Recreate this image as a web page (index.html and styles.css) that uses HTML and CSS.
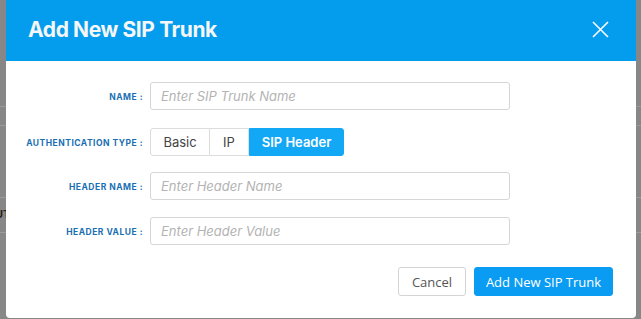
FILE: index.html
```html
<!DOCTYPE html>
<html>
<head>
<meta charset="utf-8">
<link rel="stylesheet" href="styles.css">
</head>
<body>
<div class="backdrop">
  <div class="behind-text">UT</div>
  <div class="modal">
    <div class="modal-header">
      <h1 class="title">Add New SIP Trunk</h1>
      <button class="close" aria-label="Close">
        <svg width="17" height="17" viewBox="0 0 17 17"><path d="M1 1L16 16M16 1L1 16" stroke="#fff" stroke-width="1.6" fill="none"/></svg>
      </button>
    </div>
    <div class="modal-body">
      <div class="row">
        <label class="label">Name :</label>
        <div class="input"><span class="ph">Enter SIP Trunk Name</span></div>
      </div>
      <div class="row row-seg">
        <label class="label">Authentication Type :</label>
        <div class="seg">
          <span class="seg-item seg-basic">Basic</span>
          <span class="seg-item seg-ip">IP</span>
          <span class="seg-item seg-active">SIP Header</span>
        </div>
      </div>
      <div class="row row-hn">
        <label class="label">Header Name :</label>
        <div class="input"><span class="ph">Enter Header Name</span></div>
      </div>
      <div class="row row-hv">
        <label class="label">Header Value :</label>
        <div class="input"><span class="ph">Enter Header Value</span></div>
      </div>
    </div>
    <div class="modal-footer">
      <button class="btn btn-cancel">Cancel</button>
      <button class="btn btn-primary">Add New SIP Trunk</button>
    </div>
  </div>
</div>
</body>
</html>
```
FILE: styles.css
```css
html, body {
  margin: 0;
  padding: 0;
  width: 641px;
  height: 319px;
  overflow: hidden;
}
body {
  background: #878787;
  font-family: "Open Sans", "Liberation Sans", sans-serif;
}
.backdrop {
  position: relative;
  height: 319px;
  background:
    linear-gradient(#9a9a9a, #9a9a9a) 0 106px / 100% 1px no-repeat,
    linear-gradient(#9a9a9a, #9a9a9a) 0 125px / 100% 1px no-repeat,
    linear-gradient(#9c9c9c, #9c9c9c) 0 197px / 100% 1px no-repeat,
    linear-gradient(#9c9c9c, #9c9c9c) 0 232px / 100% 1px no-repeat,
    #878787;
}
.behind-text {
  position: absolute;
  left: -5px;
  top: 207px;
  font: bold 11px "Inter", sans-serif;
  color: #222;
}
.modal {
  position: absolute;
  left: 6px;
  top: 0;
  width: 630px;
  height: 318px;
  background: #fff;
  border-radius: 0 0 4px 4px;
  display: flex;
  flex-direction: column;
}
.modal-header {
  height: 61px;
  background: #049cec;
  display: flex;
  align-items: center;
  justify-content: space-between;
  padding: 0 27px 0 22px;
}
.title {
  margin: 0;
  color: #f4f6f8;
  font-family: "Inter", sans-serif;
  font-weight: 700;
  font-size: 21px;
  letter-spacing: -0.4px;
  padding-bottom: 2px;
}
.close {
  border: 0;
  background: none;
  padding: 0;
  width: 17px;
  height: 17px;
  display: flex;
  margin-bottom: 2px;
}
.modal-body {
  padding-top: 21px;
  display: flex;
  flex-direction: column;
}
.row {
  display: flex;
  align-items: center;
  height: 28px;
}
.row-seg { margin-top: 18px; }
.row-hn { margin-top: 16px; }
.row-hv { margin-top: 17px; }
.label {
  width: 144px;
  text-align: right;
  padding-right: 7px;
  box-sizing: border-box;
  font-family: "Inter", sans-serif;
  font-weight: 700;
  font-size: 8.5px;
  letter-spacing: 0.5px;
  text-transform: uppercase;
  color: #1a6fb4;
  padding-top: 1px;
}
.input {
  width: 360px;
  height: 28px;
  box-sizing: border-box;
  border: 1px solid #d6d6d6;
  border-radius: 3px;
  display: flex;
  align-items: center;
  padding-left: 10px;
}
.ph {
  font-family: "Inter", sans-serif;
  font-style: italic;
  font-size: 13px;
  color: #b3b3b3;
}
.seg {
  display: flex;
  height: 28px;
  box-sizing: border-box;
}
.seg-item {
  display: flex;
  align-items: center;
  justify-content: center;
  font-family: "Inter", sans-serif;
  font-size: 13px;
  color: #444;
  box-sizing: border-box;
  height: 28px;
  border: 1px solid #dcdcdc;
}
.seg-basic {
  width: 60px;
  border-radius: 3px 0 0 3px;
}
.seg-ip {
  width: 39px;
  border-left: 0;
  border-right: 1px solid #e0e0e0;
}
.seg-active {
  width: 95px;
  background: #12a8f6;
  border-color: #12a8f6;
  color: #fff;
  font-weight: 600;
  border-radius: 0 3px 3px 0;
}
.modal-footer {
  margin-top: auto;
  margin-bottom: 22px;
  display: flex;
  justify-content: flex-end;
  gap: 8px;
  padding-right: 23px;
}
.btn {
  height: 29px;
  border-radius: 3px;
  font-family: "Open Sans", sans-serif;
  font-size: 13px;
  padding: 0;
  cursor: pointer;
}
.btn-cancel {
  width: 68px;
  background: #fff;
  border: 1px solid #d4d4d4;
  color: #555;
}
.btn-primary {
  width: 139px;
  background: #0a9cf2;
  border: 1px solid #0a9cf2;
  color: #fff;
}
```
